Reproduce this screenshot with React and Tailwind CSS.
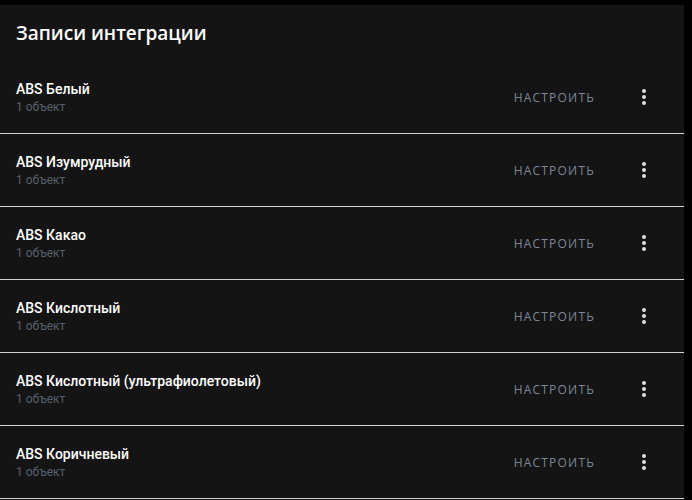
import React from "react";

const items = [
  "ABS Белый",
  "ABS Изумрудный",
  "ABS Какао",
  "ABS Кислотный",
  "ABS Кислотный (ультрафиолетовый)",
  "ABS Коричневый",
];

function Dots() {
  return (
    <svg width="24" height="24" viewBox="0 0 24 24" fill="#e1e1e1">
      <path d="M12,16A2,2 0 0,1 14,18A2,2 0 0,1 12,20A2,2 0 0,1 10,18A2,2 0 0,1 12,16M12,10A2,2 0 0,1 14,12A2,2 0 0,1 12,14A2,2 0 0,1 10,12A2,2 0 0,1 12,10M12,4A2,2 0 0,1 14,6A2,2 0 0,1 12,8A2,2 0 0,1 10,6A2,2 0 0,1 12,4Z" />
    </svg>
  );
}

export default function App() {
  return (
    <div className="w-[692px] h-[500px] bg-black pt-[5px] pr-[8px] overflow-hidden" style={{ fontFamily: "Roboto, 'Noto Sans', sans-serif" }}>
      <div className="bg-[#141414] h-full">
        <div className="h-[56px] px-4 flex items-center">
          <h1 className="text-[19px] font-semibold text-white leading-8 font-['Open_Sans',sans-serif]">Записи интеграции</h1>
        </div>
        {items.map((name) => (
          <div key={name} className="h-[73px] border-b border-[#d4d4d4] flex items-center pl-4 pr-4">
            <div className="flex-1 flex flex-col mt-[-1px]">
              <div className="text-[14px] font-medium text-white leading-5">{name}</div>
              <div className="text-[12px] text-[#56606e] leading-4">1 объект</div>
            </div>
            <div className="text-[12px] font-normal tracking-[1.2px] text-[#7c8796] mr-[25px] pt-[2px] font-['Open_Sans',sans-serif]">НАСТРОИТЬ</div>
            <div className="w-[48px] h-[48px] flex items-center justify-center">
              <Dots />
            </div>
          </div>
        ))}
      </div>
    </div>
  );
}
